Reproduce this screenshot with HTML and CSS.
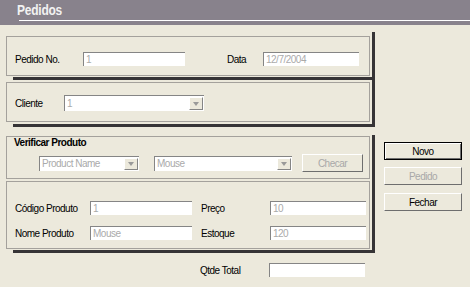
FILE: index.html
```html
<!DOCTYPE html>
<html lang="pt">
<head>
  <meta charset="UTF-8" />
  <title>Pedidos</title>
  <link rel="stylesheet" href="styles.css">
</head>
<body>

<!-- Header -->
<div class="header">
  <div class="title-line"><span class="title">Pedidos</span></div>
</div>

<div class="main">
  <div class="forms">

    <!-- Pedido -->
    <div class="frame frame-a">
      <div class="panel panel-pedido">
        <div class="row">
          <span class="label w68">Pedido No.</span>
          <span class="field w102">1</span>
          <span class="label data-label">Data</span>
          <span class="field w96">12/7/2004</span>
        </div>
      </div>
    </div>

    <!-- Cliente -->
    <div class="frame frame-b">
      <div class="panel panel-cliente">
        <div class="row">
          <span class="label w49">Cliente</span>
          <div class="select sel-cliente"><span class="val">1</span><span class="arrow"></span></div>
        </div>
      </div>
    </div>

    <!-- Produto -->
    <div class="frame frame-c">
      <div class="panel panel-verificar">
        <div class="legend">Verificar Produto</div>
        <div class="row check-row">
          <div class="select sel-tipo"><span class="val">Product Name</span><span class="arrow"></span></div>
          <div class="select sel-nome"><span class="val">Mouse</span><span class="arrow"></span></div>
          <button class="btn btn-checar" disabled>Checar</button>
        </div>
      </div>
      <div class="panel panel-produto">
        <div class="row">
          <span class="label w75">Código Produto</span>
          <span class="field w102">1</span>
          <span class="label side-label">Preço</span>
          <span class="field w96">10</span>
        </div>
        <div class="row row2">
          <span class="label w75">Nome Produto</span>
          <span class="field w102">Mouse</span>
          <span class="label side-label">Estoque</span>
          <span class="field w96">120</span>
        </div>
      </div>
    </div>

    <div class="row total-row">
      <span class="label total-label">Qtde Total</span>
      <span class="field w96"></span>
    </div>
  </div>

  <!-- Actions -->
  <div class="actions">
    <button class="btn btn-default">Novo</button>
    <button class="btn btn-pedido" disabled>Pedido</button>
    <button class="btn">Fechar</button>
  </div>
</div>

</body>
</html>
```

FILE: styles.css
```css
* { box-sizing: border-box; margin: 0; padding: 0; }
body { background: #ece9dc; color: #000; font-family: "Liberation Sans", Arial, sans-serif; font-size: 10px; letter-spacing: -0.5px; width: 470px; height: 287px; overflow: hidden; }

/* header */
.header { background: #88828c; height: 25px; }
.title-line { margin-left: 19px; height: 21px; border-bottom: 1px solid #fff; }
.title { display: inline-block; margin-left: -2px; padding-top: 2px; color: #f2f2f2; font-weight: bold; font-size: 15px; line-height: 16px; letter-spacing: -0.3px; transform: scaleX(0.8); transform-origin: left center; }

/* layout */
.main { display: flex; padding-top: 7px; }
.forms { width: 375px; }
.actions { margin-left: 9px; width: 78px; padding-top: 110px; display: flex; flex-direction: column; }

.frame { margin-left: 13px; border-right: 3px solid #363436; border-bottom: 3px solid #363436; }
.frame-a { padding: 4px 0 1px; }
.frame-b { padding: 2px 0 2px; }
.frame-c { margin-top: 8px; padding: 1px 0 1px; }

.panel { margin-left: -7px; width: 364px; border: 1px solid #a4a19c; padding-left: 8px; }
.panel-pedido { height: 40px; padding-top: 15px; }
.panel-cliente { height: 40px; padding-top: 13px; }
.panel-verificar { height: 43px; padding-left: 7px; }
.panel-produto { height: 68px; margin-top: 2px; padding-top: 19px; }

.row { display: flex; align-items: center; height: 14px; }
.row2 { margin-top: 11px; }
.label { white-space: nowrap; }
.w68 { width: 68px; }
.w49 { width: 49px; }
.w75 { width: 75px; }
.data-label { margin-left: 42px; width: 36px; }
.side-label { margin-left: 9px; width: 69px; }

.field { height: 14px; background: #fff; border-top: 1px solid #858585; border-left: 1px solid #858585; color: #aaa; padding-left: 2px; line-height: 13px; overflow: hidden; }
.w102 { width: 102px; }
.w96 { width: 96px; }

/* combo boxes */
.select { display: flex; background: #fff; border-top: 1px solid #858585; border-left: 1px solid #858585; color: #aaa; }
.select .val { flex: 1; padding-left: 2px; white-space: nowrap; overflow: hidden; }
.select .arrow { width: 14px; margin: 1px 1px 1px 0; background: #ece9dc; border-top: 1px solid #fff; border-left: 1px solid #fff; border-right: 1px solid #858585; border-bottom: 1px solid #858585; display: flex; align-items: center; justify-content: center; }
.select .arrow::after { content: ""; border-top: 4px solid #999; border-left: 3.5px solid transparent; border-right: 3.5px solid transparent; }
.sel-cliente { width: 140px; height: 16px; line-height: 15px; }
.sel-tipo { width: 100px; height: 15px; line-height: 14px; margin-left: 25px; }
.sel-nome { width: 138px; height: 15px; line-height: 14px; margin-left: 15px; }

.legend { font-weight: bold; line-height: 12px; }
.check-row { height: 18px; margin-top: 5px; }

/* buttons */
.btn { height: 18px; background: #ece9dc; border: none; border-top: 1px solid #fff; border-left: 1px solid #fff; border-right: 1px solid #6e6e6e; border-bottom: 1px solid #6e6e6e; font-family: inherit; font-size: 10px; letter-spacing: -0.5px; color: #000; }
.btn:disabled { color: #a8a8a8; }
.btn-checar { width: 61px; margin-left: 10px; }
.btn-default { border: 1px solid #000; box-shadow: inset 1px 1px #fff, inset -1px -1px #6e6e6e; margin-bottom: 7px; }
.btn-pedido { margin-bottom: 8px; }

.total-row { margin-top: 10px; padding-left: 200px; }
.total-label { width: 69px; }
```
